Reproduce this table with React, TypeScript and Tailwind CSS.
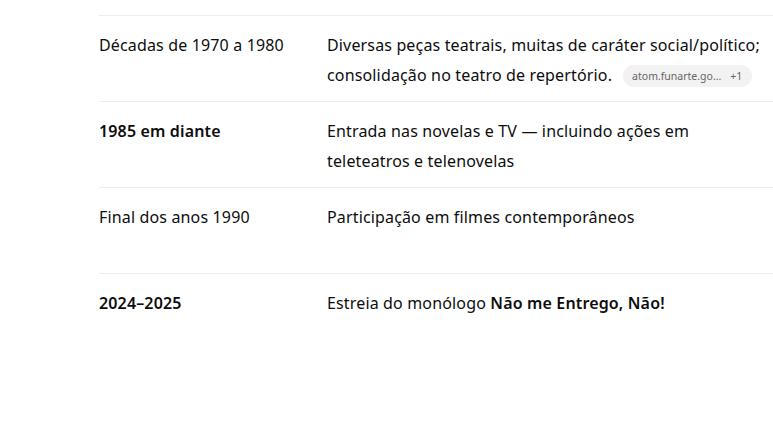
import React from "react";

function Chip() {
  return (
    <span className="ml-[11px] inline-flex items-center h-[22px] rounded-full bg-[#f2f2f2] pl-[9px] pr-[10px] text-[10.5px] text-[#666] align-[1px] leading-none tracking-normal">
      <span>atom.funarte.go...</span>
      <span className="ml-[9px]">+1</span>
    </span>
  );
}

export default function App() {
  return (
    <div className="w-[773px] h-[441px] bg-white overflow-hidden text-[#0d0d0d]" style={{ fontFamily: '"Noto Sans", sans-serif' }}>
      <div className="pt-[15px] pl-[99px] text-[16px] leading-[30px] tracking-[0.15px]">
        <div className="border-t border-[#ececec] w-[700px]">
          <div className="flex h-[86px] pt-[14px] border-b border-[#ececec]">
            <div className="w-[228px] shrink-0">Décadas de 1970 a 1980</div>
            <div className="w-[440px]">
              Diversas peças teatrais, muitas de caráter social/político; consolidação no teatro de repertório.
              <Chip />
            </div>
          </div>
          <div className="flex h-[86px] pt-[14px] border-b border-[#ececec]">
            <div className="w-[228px] shrink-0 font-semibold">1985 em diante</div>
            <div className="w-[400px]">Entrada nas novelas e TV — incluindo ações em teleteatros e telenovelas</div>
          </div>
          <div className="flex h-[86px] pt-[14px] border-b border-[#ececec]">
            <div className="w-[228px] shrink-0">Final dos anos 1990</div>
            <div>Participação em filmes contemporâneos</div>
          </div>
          <div className="flex h-[86px] pt-[14px]">
            <div className="w-[228px] shrink-0 font-semibold">2024–2025</div>
            <div>
              Estreia do monólogo <span className="font-semibold">Não me Entrego, Não!</span>
            </div>
          </div>
        </div>
      </div>
    </div>
  );
}
